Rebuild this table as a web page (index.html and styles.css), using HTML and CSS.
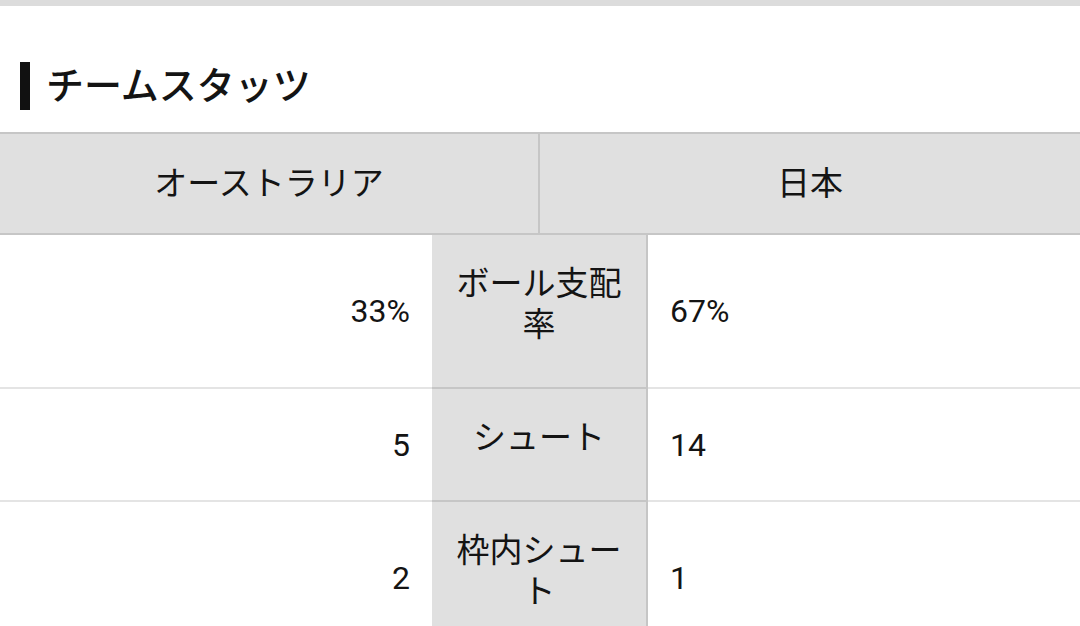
FILE: index.html
```html
<!DOCTYPE html>
<html lang="ja">
<head>
<meta charset="utf-8">
<title>チームスタッツ</title>
<link rel="stylesheet" href="styles.css">
</head>
<body>
<div class="topbar"></div>
<h2 class="heading">チームスタッツ</h2>
<div class="stats">
  <div class="teams">
    <div class="team">オーストラリア</div>
    <div class="team">日本</div>
  </div>
  <div class="row">
    <div class="val left">33%</div>
    <div class="label">ボール支配率</div>
    <div class="val right">67%</div>
  </div>
  <div class="row">
    <div class="val left">5</div>
    <div class="label">シュート</div>
    <div class="val right">14</div>
  </div>
  <div class="row">
    <div class="val left">2</div>
    <div class="label">枠内シュート</div>
    <div class="val right">1</div>
  </div>
</div>
</body>
</html>
```

FILE: styles.css
```css
html, body {
  margin: 0;
  padding: 0;
  background: #ffffff;
}
body {
  font-family: Roboto, "Noto Sans CJK JP", sans-serif;
  color: #141414;
  overflow: hidden;
}
.topbar {
  height: 6px;
  background: #dcdcdc;
}
.heading {
  margin: 56px 0 22px 20px;
  padding-left: 16px;
  border-left: 10px solid #111111;
  font-size: 38px;
  font-weight: 500;
  line-height: 48px;
  letter-spacing: 0;
}
.stats {
  width: 100%;
}
.teams {
  display: grid;
  grid-template-columns: 1fr 1fr;
  background: #e0e0e0;
  border-top: 2px solid #c6c6c6;
  border-bottom: 2px solid #c6c6c6;
}
.team {
  height: 99px;
  box-sizing: border-box;
  padding-bottom: 6px;
  display: flex;
  align-items: center;
  justify-content: center;
  font-size: 33px;
}
.team:first-child {
  border-right: 2px solid #c6c6c6;
}
.row {
  display: grid;
  grid-template-columns: 40% 20% 40%;
}
.val {
  display: flex;
  align-items: center;
  font-size: 32px;
  border-bottom: 2px solid #e4e4e4;
}
.val.left {
  justify-content: flex-end;
  padding-right: 22px;
}
.val.right {
  padding-left: 22px;
}
.label {
  background: #e0e0e0;
  border-right: 2px solid #c6c6c6;
  border-bottom: 2px solid #c6c6c6;
  padding: 28px 12px 42px;
  font-size: 33px;
  line-height: 41px;
  text-align: center;
}
```
